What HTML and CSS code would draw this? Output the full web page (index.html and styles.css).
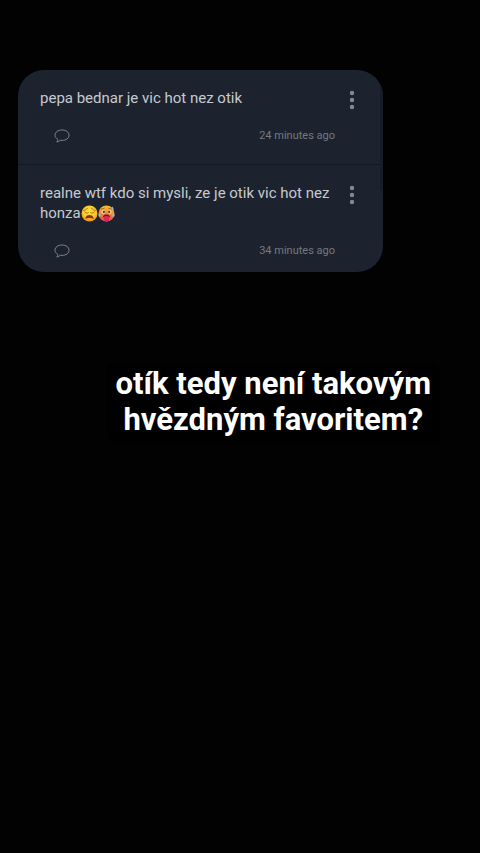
FILE: index.html
```
<!DOCTYPE html>
<html lang="cs">
<head>
<meta charset="utf-8">
<meta name="viewport" content="width=device-width, initial-scale=1">
<title>Story</title>
<link rel="stylesheet" href="styles.css">
</head>
<body>
<svg class="defs" aria-hidden="true">
  <defs>
    <radialGradient id="face" cx="50%" cy="35%" r="65%">
      <stop offset="0" stop-color="#ffe23a"/>
      <stop offset="0.65" stop-color="#fdc62c"/>
      <stop offset="1" stop-color="#ef8f1c"/>
    </radialGradient>
    <linearGradient id="heat" x1="0" y1="0" x2="0" y2="1">
      <stop offset="0" stop-color="#f9c22e"/>
      <stop offset="0.5" stop-color="#f4893a"/>
      <stop offset="1" stop-color="#e2483c"/>
    </linearGradient>
    <symbol id="bubble" viewBox="0 0 16 14">
      <path d="M3.800 10.300C2 9.300 1 7.900 1 6.200C1 3.200 4 1 8 1s7 2.200 7 5.200s-3 5.200-7 5.200c-.6 0-1.200 0-1.800-.1C5.200 12.300 4.100 12.900 2.800 13c.7-.8 1.100-1.700 1-2.700z" fill="none" stroke="currentColor" stroke-linejoin="round"/>
    </symbol>
    <symbol id="dots" viewBox="0 0 6 20">
      <g fill="currentColor"><circle cx="3" cy="3" r="2.200"/><circle cx="3" cy="10" r="2.200"/><circle cx="3" cy="17" r="2.200"/></g>
    </symbol>
  </defs>
</svg>
<main class="story">
  <section class="feed">
    <article class="post">
      <div class="post-head">
        <p class="post-text">pepa bednar je vic hot nez otik</p>
        <button class="menu" type="button" aria-label="Menu"><svg class="dots"><use href="#dots"/></svg></button>
      </div>
      <footer class="post-foot">
        <button class="reply" type="button" aria-label="Reply"><svg class="bubble"><use href="#bubble"/></svg></button>
        <time class="time">24 minutes ago</time>
      </footer>
    </article>
    <article class="post">
      <div class="post-head">
        <p class="post-text">realne wtf kdo si mysli, ze je otik vic hot nez honza<svg class="emoji" viewBox="0 0 32 32" role="img" aria-label="😩">
            <circle cx="16" cy="16" r="15" fill="url(#face)"/>
            <g fill="none" stroke="#9a5a1c" stroke-width="1.500" stroke-linecap="round">
              <path d="M5 10c3 0 5-1 7-4M27 10c-3 0-5-1-7-4"/>
              <path d="M7 13c3 3 5 3 7 1M25 13c-3 3-5 3-7 1"/>
            </g>
            <path d="M8 26c1-5 4-7 8-7s7 2 8 7c-5-2-11-2-16 0z" fill="#84361c"/>
          </svg><svg class="emoji" viewBox="0 0 32 32" role="img" aria-label="🥵">
            <circle cx="16" cy="16" r="15" fill="url(#heat)"/>
            <circle cx="10" cy="13" r="3.500" fill="#fbd9a0"/>
            <circle cx="22" cy="13" r="3.500" fill="#fbd9a0"/>
            <circle cx="11" cy="13" r="2" fill="#522716"/>
            <circle cx="21" cy="13" r="2" fill="#522716"/>
            <path d="M6 8l6-2M26 8l-6-2" stroke="#9a5a1c" stroke-width="1.500" stroke-linecap="round"/>
            <path d="M9 23c1-4 4-5 7-5s6 1 7 5z" fill="#6b1f20"/>
            <path d="M11 22c2-2 8-2 10 0v5c0 6-10 6-10 0z" fill="#e02560"/>
            <path d="M3 15c3 4 3 7 0 7s-3-4 0-7zM29 14c3 4 3 8 0 8s-3-4 0-8zM27 3c3 3 3 6 1 6s-3-3-1-6z" fill="#8ebfca"/>
          </svg></p>
        <button class="menu" type="button" aria-label="Menu"><svg class="dots"><use href="#dots"/></svg></button>
      </div>
      <footer class="post-foot">
        <button class="reply" type="button" aria-label="Reply"><svg class="bubble"><use href="#bubble"/></svg></button>
        <time class="time">34 minutes ago</time>
      </footer>
    </article>
  </section>
  <h1 class="caption">otík tedy není takovým<br>hvězdným favoritem?</h1>
</main>
</body>
</html>
```
FILE: styles.css
```
* {
  box-sizing: border-box;
}

body {
  margin: 0;
  min-height: 100vh;
  background: #020203;
  color: #c6cad0;
  font-family: Roboto, "Noto Sans", sans-serif;
}

.defs {
  position: absolute;
  width: 0;
  height: 0;
}

.story {
  display: flex;
  flex-direction: column;
  padding: 70px 40px 0 18px;
}

.feed {
  position: relative;
  width: 86.5%;
  overflow: hidden;
  border-radius: 26px;
  background: #1c232e;
}

/* scrollbar thumb along the right edge */
.feed::after {
  content: "";
  position: absolute;
  top: 0;
  right: 0;
  width: 3px;
  height: 60%;
  background: #171d26;
}

.post {
  padding: 18px 28px 20px 22px;
}

.post + .post {
  padding-bottom: 13px;
  border-top: 1px solid #131922;
}

.post-head {
  display: flex;
  justify-content: space-between;
  align-items: flex-start;
}

.post-text {
  margin: 0;
  font-size: 15px;
  line-height: 20px;
}

.emoji {
  width: 17px;
  height: 17px;
  vertical-align: -4px;
}

.menu,
.reply {
  display: flex;
  padding: 0;
  border: 0;
  background: none;
  color: #858a91;
}

/* the dots hang below the first text line without growing the row */
.menu {
  flex: none;
  margin: 2px 0 -2px;
}

.dots {
  width: 6px;
  height: 20px;
}

.post-foot {
  display: flex;
  justify-content: space-between;
  align-items: center;
  margin-top: 20px;
  padding: 0 20px 0 14px;
}

.reply {
  color: #80858c;
}

.bubble {
  width: 16px;
  height: 14px;
}

.time {
  color: #747980;
  font-size: 11px;
  line-height: 16px;
}

.caption {
  align-self: flex-end;
  margin: 91px 0 0;
  padding: 3px 9px 5px;
  border-radius: 8px;
  background: #000;
  color: #fff;
  font-size: 31px;
  font-weight: 700;
  line-height: 36px;
  text-align: center;
  white-space: nowrap;
}
```
